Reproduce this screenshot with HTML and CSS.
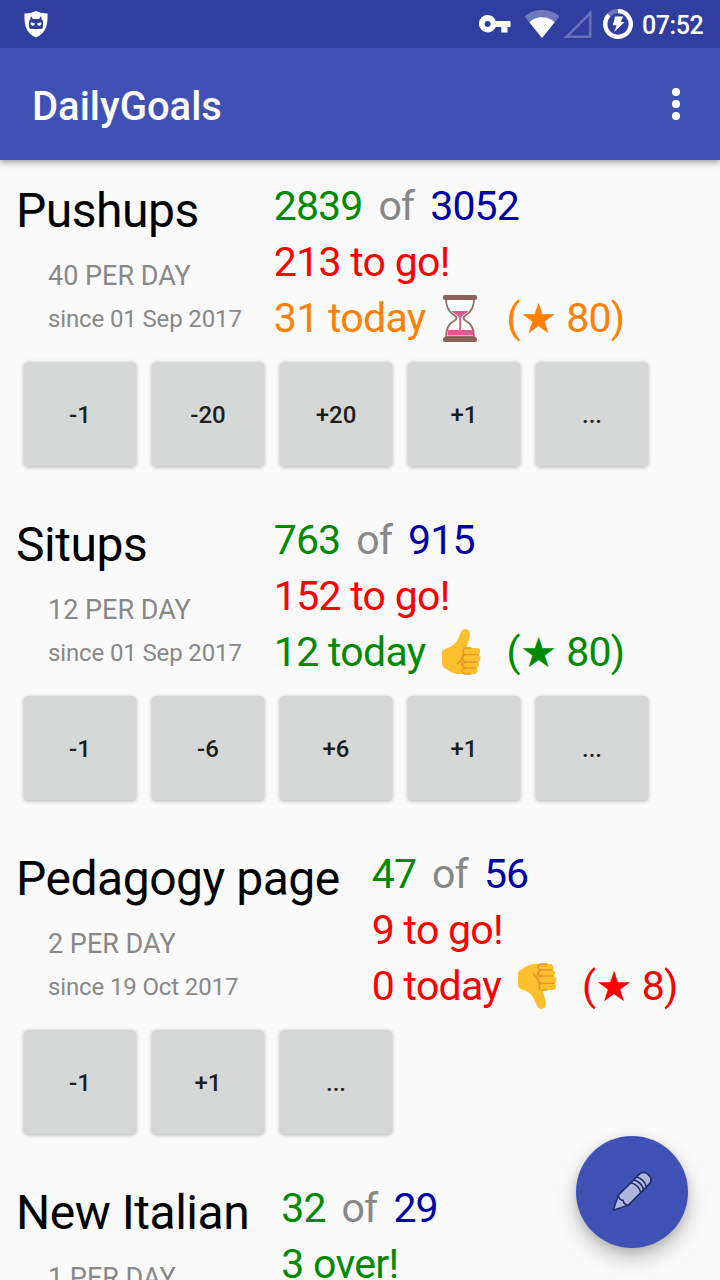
FILE: index.html
```html
<!DOCTYPE html>
<html lang="en">
<head>
<meta charset="utf-8">
<title>DailyGoals</title>
<link rel="stylesheet" href="styles.css">
</head>
<body>
<svg width="0" height="0" class="defs" aria-hidden="true">
  <defs>
    <symbol id="thumb" viewBox="0 0 40 48">
      <path fill="#fbc02d" d="M1 26C1 22 3 21 8 19.500C15 16.500 17 11 19.500 5C21 1.500 23 .8 25.500 1.200C29 2 29.500 6 28.500 10L25.500 20H35C38.500 20 39.500 22 39 24.500Q38.800 26 37.500 26.700Q40 28 39.500 30.500Q39.300 33 37 34Q38.500 35.500 38 37.500Q37.500 39.500 35.500 40Q37 41 36.500 43Q36 46 33 46H17C12 46 9.500 43.500 6 41.500C3 40 1.500 39 1 36Z"/>
      <path fill="none" stroke="#e59626" stroke-width="1.300" stroke-linecap="round" stroke-linejoin="round" d="M37 26.700H25.500Q22 26.500 22 23.500Q22 20 26 20H30M36 34H25Q21.500 33.500 21.500 30Q22 27 25.500 26.700M35 40H25Q21.500 39.500 21.500 37Q21.500 34.500 25 34M30 46H24Q21 45.500 21 43Q21 40.500 25 40M22.500 23Q23 29 16.500 36M20 33.500Q21 36 20.500 37"/>
    </symbol>
  </defs>
</svg>
<div class="screen">
  <div class="statusbar">
    <svg class="shield" width="24" height="27" viewBox="0 0 24 27">
      <path fill="#fff" d="M12 0Q17 2.500 23.500 2.500C24 14 22 22 12 26.500C2 22 0 14 .5 2.500Q7 2.500 12 0Z"/>
      <path fill="#303f9f" d="M7.300 5L8.800 8H15.200L16.700 5Q17.500 6.500 17.500 8.300Q19 9 19 11V16Q19 18 16.500 18H7.500Q5 18 5 16V11Q5 9 6.500 8.300Q6.500 6.500 7.300 5Z"/>
      <path fill="#fff" d="M6.700 11.200L11 12.600Q10.500 15 8.500 14.800Q6.600 14.400 6.700 11.200ZM17.300 11.200L13 12.600Q13.500 15 15.500 14.800Q17.400 14.400 17.300 11.200Z"/>
    </svg>
    <svg class="key" width="32" height="18" viewBox="0 0 32 18">
      <path fill="#fff" fill-rule="evenodd" d="M8.500 0A8.700 8.700 0 1 0 16.700 12H22.300V17.500H28.500V12H31.500V6H16.700A8.700 8.700 0 0 0 8.500 0ZM8.600 6A3 3 0 1 1 8.600 12A3 3 0 1 1 8.600 6Z"/>
    </svg>
    <svg class="wifi" width="36" height="28" viewBox="0 0 36 28">
      <path fill="#7079bc" d="M18 28L.5 6.200C10-2.100 26-2.100 35.500 6.200Z"/>
      <path fill="#fff" d="M18 28L5.400 12.300C12 5.700 24 5.700 30.600 12.300Z"/>
    </svg>
    <svg class="signal" width="29" height="29" viewBox="0 0 29 29">
      <path fill="none" stroke="#6670b7" stroke-width="2.600" d="M27.200 3.200V26.700H3.700Z"/>
    </svg>
    <svg class="battery" width="30" height="30" viewBox="0 0 30 30">
      <circle cx="15" cy="15" r="12.800" fill="none" stroke="#7079bc" stroke-width="4.300"/>
      <path fill="none" stroke="#fff" stroke-width="4.300" d="M15 2.200A12.800 12.800 0 1 1 5.950 5.950"/>
      <path fill="#fff" d="M12 7.500H20.200L17.700 13H21.500L11.200 23L13.600 16.200H9.800Z"/>
    </svg>
    <span class="clock">07:52</span>
  </div>
  <header class="appbar">
    <h1 class="title">DailyGoals</h1>
    <svg class="more" width="8" height="32" viewBox="0 0 8 32" fill="#fff"><circle cx="4" cy="4" r="4"/><circle cx="4" cy="16" r="4"/><circle cx="4" cy="28" r="4"/></svg>
  </header>
  <main class="goals">
    <section class="goal">
      <div class="summary">
        <div class="info">
          <h2 class="name">Pushups</h2>
          <p class="rate">40 PER DAY</p>
          <p class="since">since 01 Sep 2017</p>
        </div>
        <div class="stats">
          <p class="line count"><span class="green">2839</span><span class="of">of</span><span class="blue">3052</span></p>
          <p class="line red">213 to go!</p>
          <p class="line orange">31 today<svg class="emoji" width="40" height="48" viewBox="0 0 40 48">
            <path fill="#fff" stroke="#8d6e63" stroke-width="1.800" d="M5 5C5 14 8 18 13 21Q18 24 13 27C7 30 5 36 5 43H33C33 36 31 30 25 27Q20 24 25 21C30 18 33 14 33 5Z"/>
            <path fill="#dc5c91" d="M10.500 17H27.500Q26 19 23 20.500Q20 22 20 24.500V36H32V41.500H6.500V36H18.200V24.500Q18 22 15 20.500Q12 19 10.500 17Z"/>
            <rect x="2" y="1" width="34" height="5" rx="2" fill="#8b6056"/><rect x="2" y="43" width="34" height="5" rx="2" fill="#8b6056"/>
          </svg><span class="best">(<span class="star">★</span> 80)</span></p>
        </div>
      </div>
      <div class="actions">
        <button class="btn">-1</button><button class="btn">-20</button><button class="btn">+20</button><button class="btn">+1</button><button class="btn">...</button>
      </div>
    </section>
    <section class="goal">
      <div class="summary">
        <div class="info">
          <h2 class="name">Situps</h2>
          <p class="rate">12 PER DAY</p>
          <p class="since">since 01 Sep 2017</p>
        </div>
        <div class="stats">
          <p class="line count"><span class="green">763</span><span class="of">of</span><span class="blue">915</span></p>
          <p class="line red">152 to go!</p>
          <p class="line green">12 today<svg class="emoji" width="40" height="48"><use href="#thumb"/></svg><span class="best">(<span class="star">★</span> 80)</span></p>
        </div>
      </div>
      <div class="actions">
        <button class="btn">-1</button><button class="btn">-6</button><button class="btn">+6</button><button class="btn">+1</button><button class="btn">...</button>
      </div>
    </section>
    <section class="goal">
      <div class="summary">
        <div class="info">
          <h2 class="name">Pedagogy page</h2>
          <p class="rate">2 PER DAY</p>
          <p class="since">since 19 Oct 2017</p>
        </div>
        <div class="stats">
          <p class="line count"><span class="green">47</span><span class="of">of</span><span class="blue">56</span></p>
          <p class="line red">9 to go!</p>
          <p class="line red">0 today<svg class="emoji flipped" width="40" height="48"><use href="#thumb"/></svg><span class="best">(<span class="star">★</span> 8)</span></p>
        </div>
      </div>
      <div class="actions">
        <button class="btn">-1</button><button class="btn">+1</button><button class="btn">...</button>
      </div>
    </section>
    <section class="goal">
      <div class="summary">
        <div class="info">
          <h2 class="name">New Italian</h2>
          <p class="rate">1 PER DAY</p>
        </div>
        <div class="stats">
          <p class="line count"><span class="green">32</span><span class="of">of</span><span class="blue">29</span></p>
          <p class="line green">3 over!</p>
        </div>
      </div>
    </section>
  </main>
  <button class="fab" aria-label="Edit">
    <svg width="44" height="44" viewBox="0 0 44 44">
      <g transform="translate(2.500 41) rotate(-45)" fill="#b0b7df" stroke="#202c6c" stroke-width="1.600" stroke-linejoin="round">
        <path d="M1 0L15 -7H44Q51 -7 51 0Q51 7 44 7H15Z"/>
        <path fill="none" d="M15 -7Q12.500 -3 15 0Q12.500 3 15 7M33 -7Q37 0 33 7M37 -7Q41 0 37 7M41 -7Q45 0 41 7"/>
      </g>
    </svg>
  </button>
</div>
</body>
</html>
```
FILE: styles.css
```css
* { box-sizing: border-box; }
body { margin: 0; font-family: Roboto, "DejaVu Sans", sans-serif; background: #fafafa; overflow: hidden; }
h1, h2, p { margin: 0; font-weight: 400; }
svg { display: block; flex: none; }
.defs { position: absolute; }
.screen { position: relative; width: 720px; height: 1280px; overflow: hidden; display: flex; flex-direction: column; background: #fafafa; }
.statusbar { flex: none; height: 48px; background: #303f9f; display: flex; align-items: flex-start; padding-left: 24px; color: #fff; z-index: 2; }
.shield { margin-top: 11px; }
.key { margin: 15px 0 0 431px; }
.wifi { margin: 10px 0 0 13px; }
.signal { margin: 10px 0 0 3px; }
.battery { margin: 9px 0 0 11px; }
.clock { margin-left: 9px; font-size: 25px; line-height: 51px; font-weight: 500; letter-spacing: -0.4px; }
.appbar { flex: none; height: 112px; background: #3f51b5; padding: 6px 40px 0 32px; display: flex; align-items: center; justify-content: space-between; box-shadow: 0 2px 7px rgba(0,0,0,.4); z-index: 1; }
.title { color: #fff; font-size: 40px; font-weight: 500; line-height: 48px; }
.more { margin-top: -6px; }
.goals { padding: 18px 16px 0; }
.goal { height: 334px; }
.summary { display: flex; height: 176px; }
.info { padding-top: 5px; margin-right: 32px; }
.name { font-size: 48px; line-height: 56px; letter-spacing: -0.48px; white-space: nowrap; color: #000; }
.rate { margin: 20px 0 0 32px; font-size: 27px; line-height: 34px; color: #888; }
.since { margin: 10px 0 0 32px; font-size: 24px; line-height: 32px; letter-spacing: -0.13px; color: #888; white-space: nowrap; }
.line { display: flex; height: 56px; font-size: 41px; line-height: 56px; letter-spacing: -0.7px; white-space: nowrap; }
.count { letter-spacing: -0.9px; }
.of { margin: 0 16px; color: #888; }
.green { color: #008a00; }
.blue { color: #0000a8; }
.red { color: #f00; }
.orange { color: #ff8000; }
.emoji { margin: 4px 0 0 16px; }
.flipped { transform: scaleY(-1); }
.best { margin-left: 25px; display: flex; white-space: pre; }
.star { font-family: "DejaVu Sans", sans-serif; font-size: 42px; padding-top: 1px; }
.actions { display: flex; gap: 16px; padding: 8px 0 0 8px; }
.btn { width: 112px; height: 104px; padding: 2px 0 0; border: 0; border-radius: 4px; background: #d6d7d7; color: #1d1e1e; font: 500 24px/28px Roboto, sans-serif; box-shadow: 0 1px 4px rgba(0,0,0,.3); }
.fab { position: absolute; left: 576px; top: 1136px; width: 112px; height: 112px; border: 0; border-radius: 50%; padding: 0; background: #3f51b5; display: flex; align-items: center; justify-content: center; box-shadow: 0 10px 20px rgba(0,0,0,.24), 0 2px 8px rgba(0,0,0,.12); z-index: 2; }
```
